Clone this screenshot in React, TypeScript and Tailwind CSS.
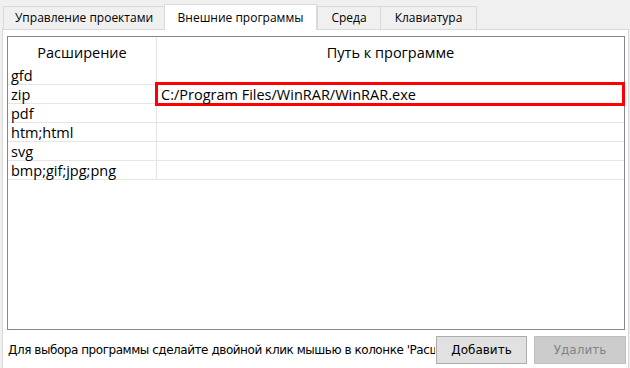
const rows = [
  { ext: 'gfd', path: '' },
  { ext: 'zip', path: 'C:/Program Files/WinRAR/WinRAR.exe', editing: true },
  { ext: 'pdf', path: '' },
  { ext: 'htm;html', path: '' },
  { ext: 'svg', path: '' },
  { ext: 'bmp;gif;jpg;png', path: '' },
];

const tabs = [
  { label: 'Управление проектами', w: 'w-[162px]' },
  { label: 'Внешние программы', w: 'w-[153px]', active: true },
  { label: 'Среда', w: 'w-[64px]' },
  { label: 'Клавиатура', w: 'w-[97px]' },
];

export default function App() {
  return (
    <div className="w-[630px] h-[368px] bg-[#f0f0f0] flex flex-col overflow-hidden text-black [font-family:'Open_Sans','Noto_Sans',sans-serif]">
      {/* вкладки */}
      <div className="h-[31px] flex items-end pl-[3px] relative z-10">
        {tabs.map((t) =>
          t.active ? (
            <div
              key={t.label}
              className={`${t.w} h-[26px] -mb-px bg-white border border-b-0 border-[#d9d9d9] flex items-center justify-center text-[12px]`}
            >
              {t.label}
            </div>
          ) : (
            <div
              key={t.label}
              className={`${t.w} h-[23px] -mr-px bg-[#f0f0f0] border border-b-0 border-[#d9d9d9] flex items-center justify-center text-[12px]`}
            >
              {t.label}
            </div>
          )
        )}
      </div>

      {/* панель */}
      <div className="flex-1 ml-[2px] mr-[1px] bg-white border-l border-t border-r border-[#d9d9d9] flex flex-col pl-[4px] pt-[6px]">
        <div className="w-[618px] h-[294px] border border-[#828790] flex flex-col text-[14.5px]">
          <div className="h-[29px] flex shrink-0">
            <div className="w-[149px] border-r border-[#e5e5e5] flex items-center justify-center pt-[2px]">
              Расширение
            </div>
            <div className="flex-1 flex items-center justify-center pt-[2px]">Путь к программе</div>
          </div>
          {rows.map((r) => (
            <div key={r.ext} className="h-[19px] flex shrink-0 border-b border-[#e5e5e5]">
              <div className="w-[149px] border-r border-[#e5e5e5] pl-[3px] pt-[2px] flex items-center leading-none">
                {r.ext}
              </div>
              <div className="flex-1 relative flex items-center pl-[4px] leading-none">
                {r.editing && (
                  <div className="absolute -left-[2px] -right-[1px] -top-[3px] -bottom-[3px] border-[3px] border-[#ff0000] bg-white flex items-center pl-[3px] pt-[2px]">
                    {r.path}
                  </div>
                )}
              </div>
            </div>
          ))}
        </div>

        {/* подсказка и кнопки */}
        <div className="flex items-center h-[38px] pt-[2px]">
          <div className="w-[428px] overflow-hidden whitespace-nowrap pl-[1px] text-[12px] [font-family:'DejaVu_Sans',sans-serif] tracking-[-0.45px]">
            Для выбора программы сделайте двойной клик мышью в колонке 'Расширение'
          </div>
          <button className="ml-[1px] w-[91px] h-[28px] bg-[#e1e1e1] border border-[#adadad] text-[12px] [font-family:'DejaVu_Sans',sans-serif]">
            Добавить
          </button>
          <button className="ml-[7px] w-[92px] h-[28px] bg-[#cccccc] border border-[#bfbfbf] text-[#838383] text-[12px] [font-family:'DejaVu_Sans',sans-serif]">
            Удалить
          </button>
        </div>
      </div>
    </div>
  );
}
